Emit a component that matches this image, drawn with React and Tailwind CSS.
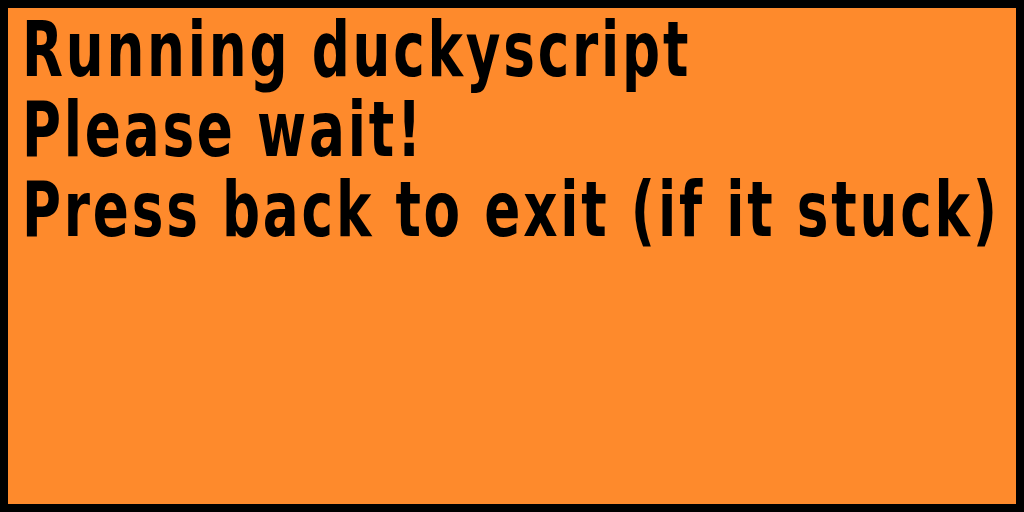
import React from "react";

const lines = ["Running duckyscript", "Please wait!", "Press back to exit (if it stuck)"];

export default function App() {
  return (
    <div className="w-[1024px] h-[512px] bg-black p-2">
      <div className="w-full h-full bg-[#fe8a2c] pl-[14px] pt-[2px] overflow-hidden">
        <div
          className="origin-top-left scale-x-[0.7] whitespace-nowrap text-black font-bold text-[76px] leading-[80px] tracking-[4px]"
          style={{ fontFamily: '"DejaVu Sans", sans-serif' }}
        >
          {lines.map((l) => (
            <div key={l}>{l}</div>
          ))}
        </div>
      </div>
    </div>
  );
}
